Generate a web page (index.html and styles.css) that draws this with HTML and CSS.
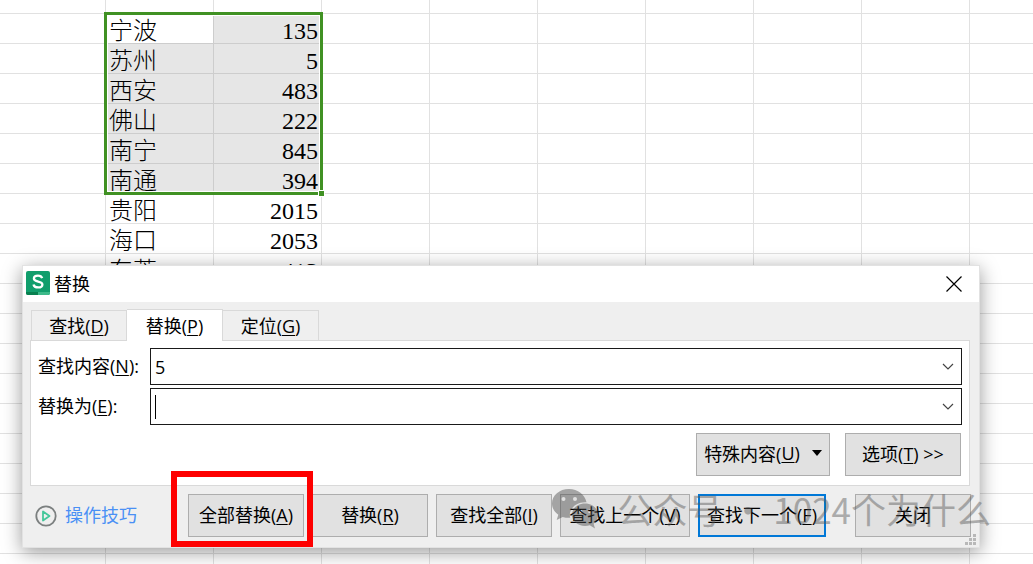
FILE: index.html
```html
<!DOCTYPE html>
<html lang="zh-CN">
<head>
  <title>替换</title>
  <meta charset="UTF-8">
  <link rel="stylesheet" href="styles.css">
</head>
<body>
  <!-- Spreadsheet behind the dialog -->
  <div class="sheet">
    <div class="cells">
      <table>
        <tr class="selected"><td class="active">宁波</td><td>135</td></tr>
        <tr class="selected"><td>苏州</td><td>5</td></tr>
        <tr class="selected"><td>西安</td><td>483</td></tr>
        <tr class="selected"><td>佛山</td><td>222</td></tr>
        <tr class="selected"><td>南宁</td><td>845</td></tr>
        <tr class="selected"><td>南通</td><td>394</td></tr>
        <tr><td>贵阳</td><td>2015</td></tr>
        <tr><td>海口</td><td>2053</td></tr>
        <tr><td>东莞</td><td>413</td></tr>
      </table>
      <div class="selection"></div>
    </div>
  </div>

  <div class="dialog">
    <div class="title-bar">
      <svg class="logo" width="24" height="24" viewBox="0 0 24 24">
        <rect width="24" height="24" rx="2" fill="#119e6c"/>
        <path d="M0 21h12v3H2a2 2 0 0 1-2-2z" fill="#08804f"/>
        <path d="M12 21h12v1a2 2 0 0 1-2 2H12z" fill="#3dba8a"/>
        <path d="M16.2 7.2C15.600 5.400 14 4.600 12 4.600c-2.400 0-4.100 1.100-4.100 2.900 0 4.100 8.500 2 8.500 5.900 0 1.900-1.700 3-4.200 3-2.600 0-4.300-1.100-4.700-3" fill="none" stroke="#fff" stroke-width="2.300"/>
      </svg>
      <span class="title">替换</span>
      <button class="close" aria-label="关闭窗口">
        <svg width="16" height="16" viewBox="0 0 16 16"><path d="M.5.500l15 15M15.500.500l-15 15" stroke="#000" stroke-width="1.200"/></svg>
      </button>
    </div>

    <div class="tabs">
      <button class="tab">查找(<u>D</u>)</button>
      <button class="tab current">替换(<u>P</u>)</button>
      <button class="tab">定位(<u>G</u>)</button>
    </div>

    <div class="panel">
      <div class="field">
        <label for="find-text">查找内容(<u>N</u>):</label>
        <div class="combo">
          <input type="text" id="find-text" value="5">
          <button class="arrow" aria-label="查找记录">
            <svg width="12" height="8" viewBox="0 0 12 8"><path d="M1 1l5 5 5-5" fill="none" stroke="#444" stroke-width="1.200"/></svg>
          </button>
        </div>
      </div>
      <div class="field">
        <label for="replace-text">替换为(<u>E</u>):</label>
        <div class="combo">
          <input type="text" id="replace-text">
          <span class="caret"></span>
          <button class="arrow" aria-label="替换记录">
            <svg width="12" height="8" viewBox="0 0 12 8"><path d="M1 1l5 5 5-5" fill="none" stroke="#444" stroke-width="1.200"/></svg>
          </button>
        </div>
      </div>
      <div class="options">
        <button class="btn special">特殊内容(<u>U</u>)
          <svg width="10" height="6" viewBox="0 0 10 6"><path d="M0 0h10L5 6z"/></svg>
        </button>
        <button class="btn">选项(<u>T</u>) &gt;&gt;</button>
      </div>
    </div>

    <div class="footer">
      <a class="tips" href="#">
        <svg width="22" height="22" viewBox="0 0 22 22" fill="none">
          <circle cx="11" cy="11" r="9.700" stroke="#7c8080" stroke-width="1.800"/>
          <path d="M8 6.500v9l6.500-4.500z" stroke="#43c79a" stroke-width="1.800" stroke-linejoin="round"/>
        </svg>
        <span>操作技巧</span>
      </a>
      <div class="highlight">
        <button class="btn">全部替换(<u>A</u>)</button>
      </div>
      <button class="btn">替换(<u>R</u>)</button>
      <button class="btn">查找全部(<u>I</u>)</button>
      <button class="btn previous">查找上一个(<u>V</u>)</button>
      <button class="btn default">查找下一个(<u>F</u>)</button>
      <button class="btn cancel">关闭</button>
    </div>

    <svg class="grip" width="11" height="11" viewBox="0 0 11 11" fill="#b8b8b8">
      <path d="M8 0h3v3H8zM4 4h3v3H4zM8 4h3v3H8zM0 8h3v3H0zM4 8h3v3H4zM8 8h3v3H8z"/>
    </svg>

    <div class="watermark">
      <svg width="46" height="40" viewBox="0 0 46 40">
        <path fill-rule="evenodd" d="M17 0C7.500 0 0 6.300 0 14.500c0 4.600 2.500 8.500 6.300 11.200L4.700 31l6-3.100c2 .6 4 .9 6.300.9h1.200C16 20 24 12.500 34.500 13.200 33 5.500 25.800 0 17 0zM11.500 8a2 2 0 1 1 0 4 2 2 0 0 1 0-4zM23 8a2 2 0 1 1 0 4 2 2 0 0 1 0-4z"/>
        <path fill-rule="evenodd" d="M33 14.500c-7.300 0-13 5-13 11.300S25.700 37 33 37c1.700 0 3.300-.3 4.800-.8L43 39.500l-1.400-4.800c2.700-2 4.400-5.200 4.400-8.900 0-6.300-5.700-11.300-13-11.300zM28.500 20.500a1.700 1.700 0 1 1 0 3.400 1.700 1.700 0 0 1 0-3.400zM37.500 20.500a1.700 1.700 0 1 1 0 3.400 1.700 1.700 0 0 1 0-3.400z"/>
      </svg>
      <span>公众号 · 1024个为什么</span>
    </div>
  </div>
</body>
</html>
```

FILE: styles.css
```css
body {
  margin: 0;
  font-family: "Open Sans", "Noto Sans CJK SC", sans-serif;
  font-size: 18px;
  color: #000;
}
button, input {
  font: inherit;
  color: inherit;
}
u {
  text-underline-offset: 2px;
}

/* Sheet */
.sheet {
  box-sizing: border-box;
  height: 100vh;
  padding: 14px 0 0 106px;
  overflow: hidden;
  background-color: #fff;
  background-image:
    linear-gradient(to right, #e1e1e1 1px, transparent 1px),
    linear-gradient(#e1e1e1 1px, transparent 1px);
  background-size: 108px 100%, 100% 30px;
  background-position: 105px 0, 0 13px;
}
.cells {
  position: relative;
  width: 216px;
}
table {
  width: 100%;
  table-layout: fixed;
  border-spacing: 0;
  font-family: "Liberation Serif", "Noto Sans CJK SC", serif;
  font-size: 24px;
  font-weight: 300;
  line-height: 24px;
}
td {
  box-sizing: border-box;
  height: 30px;
  padding: 5px 3px 0;
  border-right: 1px solid #e1e1e1;
  border-bottom: 1px solid #e1e1e1;
}
td:last-child {
  text-align: right;
}
.selected td {
  background-color: #e6e6e6;
  border-color: #cdcdcd;
}
.selected td.active {
  background-color: #fff;
}
.selection {
  position: absolute;
  box-sizing: border-box;
  top: -2px;
  left: -2px;
  width: 219px;
  height: 183px;
  border: 3px solid #409123;
  box-shadow: inset 0 0 0 1px #fff;
}
.selection::after {
  content: "";
  position: absolute;
  right: -5px;
  bottom: -5px;
  width: 5px;
  height: 5px;
  background-color: #409123;
  border: 1px solid #fff;
}

/* Dialog */
.dialog {
  position: absolute;
  top: 265px;
  left: 22px;
  right: 53px;
  border: 1px solid #e2e2e2;
  box-sizing: border-box;
  background-color: #efefef;
  box-shadow: 0 4px 18px rgba(0, 0, 0, 0.4);
}
.title-bar {
  display: flex;
  align-items: center;
  height: 36px;
  padding: 0 17px 0 3px;
  background-color: #fff;
}
.logo {
  margin-bottom: 2px;
}
.title {
  flex: 1;
  margin-left: 4px;
  padding-bottom: 2px;
}
.close {
  display: flex;
  padding: 0;
  border: none;
  background: none;
}

.tabs {
  display: flex;
  align-items: flex-end;
  margin: 7px 8px 0;
  height: 31px;
}
.tab {
  width: 96px;
  height: 30px;
  padding: 0;
  border: 1px solid #d9d9d9;
  border-bottom: none;
  background-color: #efefef;
  line-height: 28px;
}
.tab + .tab {
  border-left: none;
}
.tab.current {
  position: relative;
  height: 32px;
  margin-bottom: -1px;
  background-color: #fff;
}

.panel {
  margin: 0 9px 0 7px;
  padding: 7px;
  padding-bottom: 9px;
  border: 1px solid #d9d9d9;
  background-color: #fff;
}
.field {
  display: flex;
  align-items: center;
  margin-bottom: 3px;
}
.field label {
  width: 112px;
  padding-bottom: 3px;
  white-space: nowrap;
}
.combo {
  position: relative;
  display: flex;
  flex: 1;
  box-sizing: border-box;
  height: 37px;
  border: 1px solid #1a1a1a;
}
.combo input {
  flex: 1;
  min-width: 0;
  padding: 0 4px;
  border: none;
  outline: none;
  background: none;
}
.caret {
  position: absolute;
  top: 6px;
  left: 4px;
  width: 1px;
  height: 24px;
  background-color: #000;
}
.arrow {
  display: flex;
  align-items: center;
  padding: 0 7px;
  border: none;
  background: none;
}
.options {
  display: flex;
  justify-content: flex-end;
  gap: 15px;
  margin: 8px 1px 0 0;
}

.btn {
  box-sizing: border-box;
  width: 116px;
  height: 43px;
  padding: 0 0 3px;
  border: 1px solid #adadad;
  background-color: #e1e1e1;
  white-space: nowrap;
}
.btn.special {
  display: flex;
  align-items: center;
  justify-content: center;
  width: 134px;
}
.special svg {
  margin-left: 12px;
}
.btn.previous {
  width: 130px;
}
.btn.default {
  width: 128px;
  border: 2px solid #0078d7;
}
.btn.cancel {
  margin-left: 21px;
}

.footer {
  display: flex;
  align-items: center;
  gap: 8px;
  padding: 8px 8px 10px 12px;
}
.tips {
  display: flex;
  align-items: center;
  gap: 8px;
  margin-right: auto;
  color: #4a90f5;
  text-decoration: none;
  white-space: nowrap;
}
.tips span {
  padding-bottom: 3px;
}
.highlight {
  position: relative;
  display: flex;
}
.highlight::after {
  content: "";
  position: absolute;
  top: -23px;
  right: -9px;
  bottom: -10px;
  left: -17px;
  z-index: 1;
  border: 6px solid #fe0000;
  pointer-events: none;
}
.grip {
  position: absolute;
  right: 3px;
  bottom: 2px;
}

.watermark {
  position: absolute;
  right: -12px;
  bottom: 12px;
  display: flex;
  align-items: center;
  gap: 20px;
  color: #5a5a5a;
  font-family: "Noto Sans CJK SC", sans-serif;
  font-size: 35px;
  line-height: 52px;
  white-space: nowrap;
  opacity: 0.45;
  pointer-events: none;
}
.watermark svg {
  fill: #4a4a4a;
}
```
